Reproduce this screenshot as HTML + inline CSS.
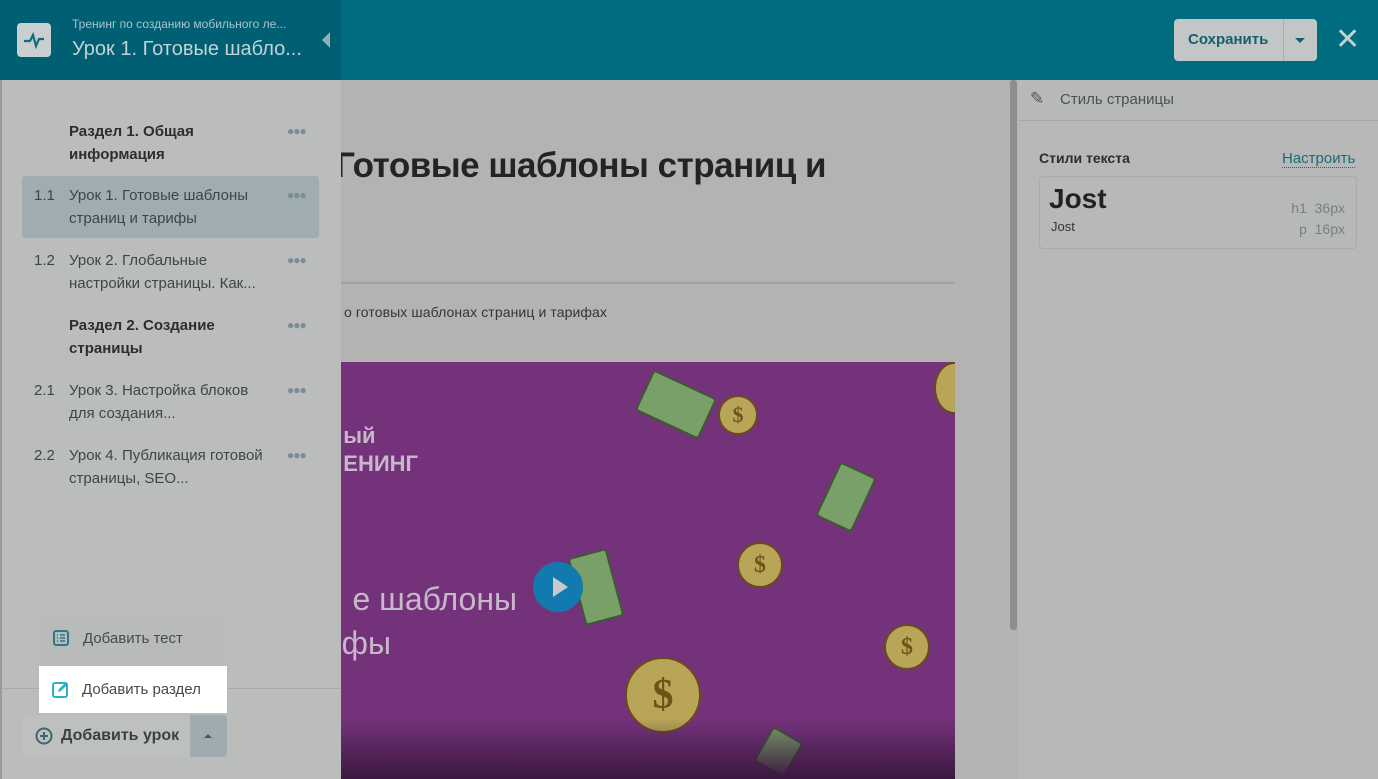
<!DOCTYPE html>
<html><head><meta charset="utf-8"><style>
*{box-sizing:border-box;margin:0;padding:0}
body{width:1378px;height:779px;overflow:hidden;position:relative;background:#b3b3b3;font-family:"Liberation Sans","DejaVu Sans",sans-serif;color:#2a2a2a}
.top{position:absolute;left:0;top:0;width:1378px;height:80px;background:#006c7f}
.lhead{position:absolute;left:0;top:0;width:341px;height:80px;background:#005f72}
.logo{position:absolute;left:17px;top:23px;width:34px;height:34px;background:#c9cfd0;border-radius:4px}
.sub{position:absolute;left:72px;top:17px;font-size:12px;color:#a9c4c9}
.ttl{position:absolute;left:72px;top:38px;font-size:20px;color:#c3d2d4}
.arrow{position:absolute;left:322px;top:32px;width:0;height:0;border-top:8px solid transparent;border-bottom:8px solid transparent;border-right:8px solid #8fb0b6}
.save{position:absolute;left:1174px;top:19px;width:143px;height:42px;background:#c2c6c6;border-radius:4px}
.save span{position:absolute;left:14px;top:12px;font-size:15px;font-weight:bold;color:#145f6c}
.save i{position:absolute;left:109px;top:0;width:1px;height:42px;background:#a8adad}
.save b{position:absolute;left:121px;top:19px;border-left:5px solid transparent;border-right:5px solid transparent;border-top:5px solid #145f6c}
.x{position:absolute;left:1335px;top:22px;font-size:30px;font-weight:bold;color:#c4d0d2}
.side{position:absolute;left:0;top:80px;width:341px;height:699px;background:#bbbdbd;border-left:2px solid #9a9a9a;z-index:2}
.it{position:absolute;left:20px;width:297px;font-size:15px;line-height:23px;color:#3f4546}
.it .n{position:absolute;left:12px;top:8px}
.it .t{position:absolute;left:47px;top:8px;width:200px}
.it .d{position:absolute;left:265px;top:8px;color:#7a8c94;font-size:12px;letter-spacing:-1px;font-weight:bold}
.bold .t{font-weight:bold;color:#2d2d2d}
.sel{background:#9fadb1;border-radius:3px}
.h1{position:absolute;right:552px;top:146px;font-size:35px;font-weight:bold;color:#242424;white-space:nowrap;letter-spacing:-0.5px}
.hr{position:absolute;left:200px;top:282px;width:755px;height:2px;background:#99a5a5}
.para{position:absolute;left:344px;top:304px;font-size:14px;color:#353535;white-space:nowrap;letter-spacing:0.1px}
.video{position:absolute;left:341px;top:362px;width:614px;height:417px;background:#74327b;overflow:hidden}
.vbot{position:absolute;left:0;bottom:0;width:100%;height:60px;background:linear-gradient(#74327b00,#3a1840)}
.coin{position:absolute;border-radius:50%;background:#b8a558;border:2px solid #6a4a1f;color:#6b5418;font-weight:bold;text-align:center;font-family:"Liberation Serif",serif}
.bill{position:absolute;background:#7aa06a;border:2px solid #3e5a33;border-radius:4px}
.play{position:absolute;left:192px;top:200px;width:50px;height:50px;border-radius:50%;background:#137aaf}
.play:after{content:"";position:absolute;left:20px;top:15px;border-top:10px solid transparent;border-bottom:10px solid transparent;border-left:15px solid #c8c8d0}
.vt{position:absolute;color:#c6b8c8;white-space:nowrap}
.scroll{position:absolute;left:1010px;top:80px;width:7px;height:550px;background:#8e8e8e;border-radius:3px}
.right{position:absolute;left:1018px;top:80px;width:360px;height:699px;background:#b7b8b8}
.rh{height:41px;border-bottom:1px solid #a6a8a8;font-size:15px;color:#4d5152;padding:11px 0 0 42px;position:relative}
.card{position:absolute;left:21px;top:96px;width:318px;height:73px;border:1px solid #a9abab;border-radius:4px}
.menu{position:absolute;left:40px;top:615px;width:185px;height:96px;background:#b9baba;border-radius:4px;z-index:3}
.mi{position:absolute;left:0;width:185px;height:48px;font-size:15px;color:#474b4c;padding:15px 0 0 43px}
.mi2{background:#fff;left:-1px;width:188px;top:51px;height:47px;color:#474b4c}
.add{position:absolute;left:22px;top:715px;width:205px;height:42px;background:#bec0c0;border-radius:4px;z-index:3}
</style></head><body>
<div class="top"></div>
<div class="lhead"></div>
<div class="logo"><svg width="34" height="34"><path d="M7 18h6l3-6 3 11 3-7h5" stroke="#0b6d7d" stroke-width="2.2" fill="none"/></svg></div>
<div class="sub">Тренинг по созданию мобильного ле...</div>
<div class="ttl">Урок 1. Готовые шабло...</div>
<div class="arrow"></div>
<div class="save"><span>Сохранить</span><i></i><b></b></div>
<div class="x">✕</div>

<div class="h1">Урок 1. Готовые шаблоны страниц и</div>
<div class="hr"></div>
<div class="para">о готовых шаблонах страниц и тарифах</div>
<div class="video">
<div class="vt" style="right:537px;top:60px;font-size:22px;font-weight:bold;line-height:28px;text-align:left">ый<br>ЕНИНГ</div>
<div class="vt" style="right:438px;top:215px;font-size:32px;line-height:44px;text-align:left">е шаблоны<br></div>
<div class="vt" style="right:564px;top:259px;font-size:32px;line-height:44px">фы</div>
<div class="bill" style="left:300px;top:20px;width:70px;height:45px;transform:rotate(25deg)"></div>
<div class="bill" style="left:485px;top:105px;width:40px;height:60px;transform:rotate(25deg)"></div>
<div class="bill" style="left:235px;top:190px;width:40px;height:70px;transform:rotate(-15deg)"></div>
<div class="bill" style="left:420px;top:370px;width:35px;height:40px;transform:rotate(30deg)"></div>
<div class="coin" style="left:377px;top:33px;width:40px;height:40px;font-size:22px;line-height:36px">$</div>
<div class="coin" style="left:396px;top:180px;width:46px;height:46px;font-size:24px;line-height:42px">$</div>
<div class="coin" style="left:543px;top:262px;width:46px;height:46px;font-size:24px;line-height:42px">$</div>
<div class="coin" style="left:284px;top:295px;width:76px;height:76px;font-size:42px;line-height:72px">$</div>
<div class="coin" style="left:593px;top:0px;width:40px;height:52px"></div>
<div class="vbot"></div>
<div class="play"></div>
</div>
<div class="scroll"></div>

<div class="right">
<div class="rh"><span style="position:absolute;left:12px;top:9px;font-size:17px;color:#555">✎</span>Стиль страницы</div>
<div style="position:absolute;left:21px;top:70px;font-size:14px;font-weight:bold;color:#2d2d2d">Стили текста</div>
<div style="position:absolute;left:264px;top:70px;font-size:15px;color:#1d6a77;border-bottom:1px dotted #1d6a77">Настроить</div>
<div class="card">
<div style="position:absolute;left:9px;top:6px;font-size:28px;font-weight:bold;color:#222">Jost</div>
<div style="position:absolute;left:11px;top:42px;font-size:13px;color:#333">Jost</div>
<div style="position:absolute;right:11px;top:21px;font-size:14px;color:#7a7f80;text-align:right;line-height:21px">h1&nbsp;&nbsp;36px<br>p&nbsp;&nbsp;16px</div>
</div>
</div>

<div class="side">
<div class="it bold" style="top:32px;height:50px"><div class="t">Раздел 1. Общая информация</div><div class="d">●●●</div></div>
<div class="it sel" style="top:96px;height:62px"><div class="n">1.1</div><div class="t">Урок 1. Готовые шаблоны страниц и тарифы</div><div class="d">●●●</div></div>
<div class="it" style="top:161px;height:62px"><div class="n">1.2</div><div class="t">Урок 2. Глобальные настройки страницы. Как...</div><div class="d">●●●</div></div>
<div class="it bold" style="top:226px;height:50px"><div class="t">Раздел 2. Создание страницы</div><div class="d">●●●</div></div>
<div class="it" style="top:291px;height:62px"><div class="n">2.1</div><div class="t">Урок 3. Настройка блоков для создания...</div><div class="d">●●●</div></div>
<div class="it" style="top:356px;height:62px"><div class="n">2.2</div><div class="t">Урок 4. Публикация готовой страницы, SEO...</div><div class="d">●●●</div></div>
<div style="position:absolute;left:0;top:608px;width:339px;height:1px;background:#a9abab"></div>
</div>

<div class="menu">
<div class="mi" style="top:0"><svg style="position:absolute;left:13px;top:15px" width="16" height="16"><rect x="1" y="1" width="14" height="14" rx="2" fill="none" stroke="#2b7a88" stroke-width="2"/><path d="M4 5h1M7 5h5M4 8h1M7 8h5M4 11h1M7 11h5" stroke="#2b7a88" stroke-width="1.5"/></svg>Добавить тест</div>
<div class="mi mi2"><svg style="position:absolute;left:13px;top:14px" width="18" height="18"><rect x="1" y="3" width="14" height="14" rx="2" fill="none" stroke="#2bb0c4" stroke-width="2"/><path d="M6 12l1-3 7-7 2 2-7 7z" fill="#2bb0c4"/></svg>Добавить раздел</div>
</div>
<div class="add">
<svg style="position:absolute;left:13px;top:12px" width="18" height="18"><circle cx="9" cy="9" r="7.5" fill="none" stroke="#3f6575" stroke-width="2"/><path d="M9 5v8M5 9h8" stroke="#3f6575" stroke-width="2"/></svg>
<span style="position:absolute;left:39px;top:12px;font-size:16px;font-weight:bold;color:#3c3f40">Добавить урок</span>
<div style="position:absolute;left:168px;top:0;width:37px;height:42px;background:#9fabae;border-radius:0 4px 4px 0"><b style="position:absolute;left:14px;top:19px;border-left:4px solid transparent;border-right:4px solid transparent;border-bottom:4px solid #2f5f7a"></b></div>
</div>
</body></html>
